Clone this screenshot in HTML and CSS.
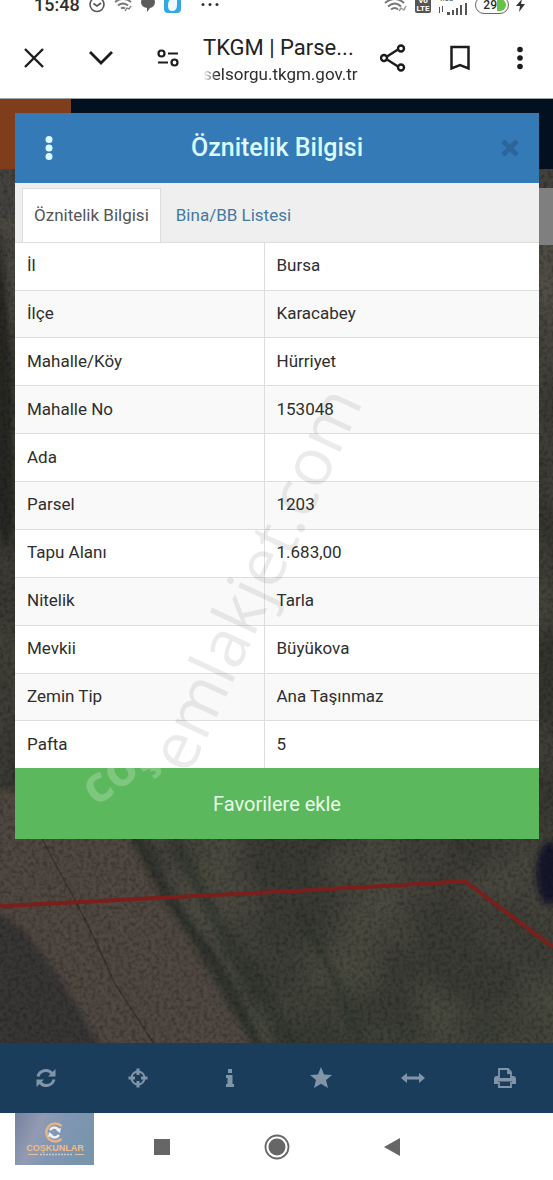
FILE: index.html
```html
<!DOCTYPE html>
<html lang="tr">
<head>
<meta charset="utf-8">
<meta name="viewport" content="width=device-width, initial-scale=1">
<title>TKGM | Parsel Sorgu</title>
<link rel="stylesheet" href="styles.css">
</head>
<body>
<div class="phone">
  <div class="status">
    <div class="status-group">
      <span class="clock">15:48</span>
      <svg width="18" height="24" viewBox="0 0 18 24" fill="none" stroke="#555" stroke-width="1.6"><circle cx="9" cy="11.500" r="7"/><path d="M5.500 10.500 9 13l4-3"/></svg>
      <svg width="18" height="24" viewBox="0 0 18 24" fill="none" stroke="#777" stroke-width="1.800"><path d="M1 9q8-6 16 0M4 12.500q5-4 10 0M7 15.500q2-1.500 4 0"/><path d="m11 18 2-3 2 1 2-3" stroke-width="1.300"/></svg>
      <svg width="16" height="24" viewBox="0 0 16 24" fill="#5c5c5c"><path d="M1 9a7 6 0 1 1 9 6l-3 4v-4Q1 14 1 9z"/></svg>
      <svg width="18" height="24" viewBox="0 0 18 24"><rect width="17" height="20" rx="4" fill="#35a7e4"/><path d="M4 13c0-6 3-9 9-9v8q0 6-5 6-4 0-4-5z" fill="#eefaff"/></svg>
      <svg class="more-dots" width="20" height="24" viewBox="0 0 20 24" fill="#333"><circle cx="3" cy="11.500" r="1.500"/><circle cx="10" cy="11.500" r="1.500"/><circle cx="17" cy="11.500" r="1.500"/></svg>
    </div>
    <div class="status-group status-end">
      <svg width="24" height="24" viewBox="0 0 24 24" fill="none" stroke="#777" stroke-width="2"><path d="M1 10q10-8 19 0M4 13.500q7-6 13 0M7 16.500q4-3 7 0"/><path d="m15 18 2-3 3 2 2-4" stroke="#999" stroke-width="1.500"/></svg>
      <span class="volte">Vo<br>LTE</span>
      <span class="signal">
        <span>4.58</span>
        <svg width="30" height="12" viewBox="0 0 30 12" fill="#555"><path d="M1 4h1v6H1zM4 3h1v6H4zM9 9h3v3H9zM14 7h2v5h-2zM18 5h2v7h-2zM22 2h2v10h-2zM27 0h2v12h-2z"/></svg>
      </span>
      <span class="battery"><b>29</b><i></i></span>
      <svg width="9" height="24" viewBox="0 0 9 24" fill="#333"><path d="M6 6 0 13h4l-1 6 6-8H5z"/></svg>
    </div>
  </div>

  <header class="browser">
    <button class="bar-button" type="button" aria-label="Kapat"><svg width="20" height="20" viewBox="0 0 20 20" fill="none" stroke="#1c1c1c" stroke-width="2.400"><path d="m1 1 18 18M19 1 1 19"/></svg></button>
    <button class="bar-button" type="button" aria-label="Küçült"><svg width="26" height="16" viewBox="0 0 26 16" fill="none" stroke="#1c1c1c" stroke-width="2.800"><path d="m2 2 11 11L24 2"/></svg></button>
    <button class="bar-button" type="button" aria-label="Site bilgileri"><svg width="22" height="18" viewBox="0 0 22 18" fill="none" stroke="#1c1c1c" stroke-width="2.200"><circle cx="4.500" cy="4.500" r="3"/><path d="M11 4.500h10M1 13.500h10"/><circle cx="17.500" cy="13.500" r="3"/></svg></button>
    <div class="page-id">
      <span class="page-title">TKGM | Parse...</span>
      <span class="page-url">selsorgu.tkgm.gov.tr</span>
    </div>
    <button class="bar-button" type="button" aria-label="Paylaş"><svg width="26" height="28" viewBox="0 0 26 28" fill="none" stroke="#1c1c1c" stroke-width="2.400"><path d="M7 12.500 18 5.500M7 15.500l11 7"/><circle cx="4" cy="14" r="3"/><circle cx="21" cy="4.500" r="3"/><circle cx="21" cy="23.500" r="3"/></svg></button>
    <button class="bar-button" type="button" aria-label="Yer işareti"><svg width="20" height="26" viewBox="0 0 20 26" fill="none" stroke="#1c1c1c" stroke-width="2.500"><path d="M1.500 2h17v21.500L10 20l-8.500 3.500z"/></svg></button>
    <button class="bar-button bar-menu" type="button" aria-label="Menü"><svg width="6" height="24" viewBox="0 0 6 24" fill="#1c1c1c"><circle cx="3" cy="3.500" r="2.800"/><circle cx="3" cy="12" r="2.800"/><circle cx="3" cy="20.500" r="2.800"/></svg></button>
  </header>

  <main class="stage">
    <svg class="map" viewBox="0 0 553 1015" preserveAspectRatio="none" aria-hidden="true">
      <defs>
        <filter id="grain" x="0" y="0" width="100%" height="100%">
          <feTurbulence type="fractalNoise" baseFrequency=".25" numOctaves="2" seed="4"/>
          <feColorMatrix values="0 0 0 0 0  0 0 0 0 0  0 0 0 0 0  1.2 0 0 0 -.5"/>
        </filter>
        <filter id="patches" x="0" y="0" width="100%" height="100%">
          <feTurbulence type="fractalNoise" baseFrequency=".012" numOctaves="2" seed="9"/>
          <feColorMatrix values="0 0 0 0 .3  0 0 0 0 .28  0 0 0 0 .18  1.2 0 0 0 -.45"/>
        </filter>
        <filter id="soft"><feGaussianBlur stdDeviation="3"/></filter>
        <linearGradient id="field" x2="0" y2="1"><stop stop-color="#45433e"/><stop offset=".5" stop-color="#33332d"/><stop offset=".8" stop-color="#3b3b35"/><stop offset="1" stop-color="#373b32"/></linearGradient>
      </defs>
      <rect width="553" height="1015" fill="url(#field)"/>
      <rect width="553" height="1015" filter="url(#patches)" opacity=".4"/>
      <path d="M0 70h15v50H0z" fill="#45433f"/>
      <g transform="translate(0 70)">
        <g filter="url(#soft)">
          <path d="M-5 620 110 640 162 730 205 800 250 878 260 950H100L40 820-5 760z" fill="#504740"/>
          <path d="M-5 742 25 762 62 812 102 880V950H-5z" fill="#393436"/>
          <path d="M133 660 165 725 215 795 265 890" stroke="#2d332c" stroke-width="9" fill="none"/>
          <path d="M150 660 190 735 235 810 270 880" stroke="#4b4b43" stroke-width="3" fill="none"/>
          <path d="M175 670 215 750 265 830 300 890" stroke="#2d332c" stroke-width="12" fill="none" opacity=".6"/>
          <path d="M300 740 330 800 360 870" stroke="#2d332c" stroke-width="8" fill="none" opacity=".5"/>
          <ellipse cx="550" cy="705" rx="14" ry="32" fill="#15182a"/>
          <path d="M-5 60q20 70 18 300Q0 420-5 300z" fill="#252622"/>
        </g>
        <path d="M42 670q15 30 32 60 22 42 40 84 22 34 44 68" stroke="#3b332c" stroke-width="1.500" fill="none"/>
        <path d="M68 680 140 790 195 880M98 700l75 110 45 70M15 690l100 150 20 40" stroke="#62564f" fill="none" opacity=".5"/>
      </g>
      <rect width="553" height="1015" filter="url(#grain)" opacity=".5"/>
      <path d="M0 808 170 799 290 793 465 783 553 849" fill="none" stroke="#7a1f1c" stroke-width="4"/>
    </svg>
    <div class="site-head" aria-hidden="true"><span></span></div>
    <div class="map-control" aria-hidden="true"></div>

    <section class="dialog" role="dialog" aria-labelledby="dialog-title">
      <div class="dialog-head">
        <button class="dialog-button" type="button" aria-label="Seçenekler"><svg width="8" height="24" viewBox="0 0 8 24" fill="#dcfbff"><circle cx="4" cy="3.500" r="3.500"/><circle cx="4" cy="12" r="3.500"/><circle cx="4" cy="20.500" r="3.500"/></svg></button>
        <h1 id="dialog-title">Öznitelik Bilgisi</h1>
        <button class="dialog-button dialog-close" type="button" aria-label="Kapat"><svg width="18" height="18" viewBox="0 0 18 18" stroke="#2c659a" stroke-width="5"><path d="m2 2 14 14M16 2 2 16"/></svg></button>
      </div>
      <div class="tabs" role="tablist">
        <button class="tab tab-active" type="button" role="tab" aria-selected="true">Öznitelik Bilgisi</button>
        <button class="tab" type="button" role="tab" aria-selected="false">Bina/BB Listesi</button>
      </div>
      <table class="facts">
        <tbody>
          <tr><th scope="row">İl</th><td>Bursa</td></tr>
          <tr><th scope="row">İlçe</th><td>Karacabey</td></tr>
          <tr><th scope="row">Mahalle/Köy</th><td>Hürriyet</td></tr>
          <tr><th scope="row">Mahalle No</th><td>153048</td></tr>
          <tr><th scope="row">Ada</th><td></td></tr>
          <tr><th scope="row">Parsel</th><td>1203</td></tr>
          <tr><th scope="row">Tapu Alanı</th><td>1.683,00</td></tr>
          <tr><th scope="row">Nitelik</th><td>Tarla</td></tr>
          <tr><th scope="row">Mevkii</th><td>Büyükova</td></tr>
          <tr><th scope="row">Zemin Tip</th><td>Ana Taşınmaz</td></tr>
          <tr><th scope="row">Pafta</th><td>5</td></tr>
        </tbody>
      </table>
      <button class="favorite" type="button">Favorilere ekle</button>
      <svg class="watermark" viewBox="0 0 524 726" aria-hidden="true">
        <text class="mark-main" transform="translate(174 663) rotate(-65)">emlakjet.com</text>
        <text class="mark-side" transform="translate(81 694) rotate(-36)">coş</text>
      </svg>
    </section>

    <nav class="tools" aria-label="Harita araçları">
      <button type="button" aria-label="Yenile"><svg width="20" height="20" viewBox="0 0 20 20"><path d="M2 8.500a8 8 0 0 1 14-3M18 11.500a8 8 0 0 1-14 3" fill="none" stroke="currentColor" stroke-width="3"/><path d="M19.500 1v7.500H12zM.5 19v-7.500H8z" fill="currentColor"/></svg></button>
      <button type="button" aria-label="Konum"><svg width="20" height="20" viewBox="0 0 20 20" fill="none" stroke="currentColor"><circle cx="10" cy="10" r="6.500" stroke-width="2"/><path d="M10 .5v6.500M10 13v6.500M.5 10H7M13 10h6.500" stroke-width="3"/></svg></button>
      <button type="button" aria-label="Bilgi"><svg width="10" height="20" viewBox="0 0 10 20" fill="currentColor"><path d="M3 1h4v4H3zM1 7h6.500v9H9v3H1v-3h1.500v-6H1z"/></svg></button>
      <button type="button" aria-label="Favoriler"><svg width="22" height="22" viewBox="0 0 22 22" fill="currentColor"><path d="m11 0 3 7.500 8 .6-6 5 2 8-7-4.400-7 4.400 2-8-6-5 8-.6z"/></svg></button>
      <button type="button" aria-label="Ölç"><svg width="24" height="12" viewBox="0 0 24 12" fill="currentColor"><path d="M0 6 6 1v3.500h12V1l6 5-6 5V7.500H6V11z"/></svg></button>
      <button type="button" aria-label="Yazdır"><svg width="22" height="20" viewBox="0 0 22 20"><path d="M5 10V1h9l3 3v6M14 1v4h3M5 14v5h12v-5" fill="none" stroke="currentColor" stroke-width="1.800"/><path d="M3 8h1.500v2h13V8H19q3 0 3 3v5h-4v-2.500H4V16H0v-5q0-3 3-3z" fill="currentColor"/></svg></button>
    </nav>
  </main>

  <footer class="system">
    <svg class="agency" width="79" height="52" viewBox="0 0 79 52" role="img" aria-label="Coşkunlar">
      <defs><linearGradient id="sky" x2="1" y2=".3"><stop stop-color="#77819f"/><stop offset=".35" stop-color="#929bb2"/><stop offset=".6" stop-color="#8296b3"/><stop offset="1" stop-color="#7895ac"/></linearGradient></defs>
      <rect width="79" height="52" fill="url(#sky)"/>
      <path d="M46.500 13a9 9 0 1 0 0 13" fill="none" stroke="#e3b584" stroke-width="2.600"/>
      <path d="M35 17q4-5 9 0M44 22q-4 5-9 0" fill="none" stroke="#eef1f5" stroke-width="2.600"/>
      <path d="m46 15-1 5-4-3zM33 24l1-5 4 3z" fill="#eef1f5"/>
      <text class="agency-name" x="40" y="38" text-anchor="middle">COŞKUNLAR</text>
      <path d="M13 41.500h10M60 41.500h9" stroke="#dfc3a4"/>
      <path d="M25 41.500h33" stroke="#c9cbd3" stroke-width="1.500" stroke-dasharray="2 1"/>
    </svg>
    <button type="button" aria-label="Son uygulamalar"><svg width="16" height="16" viewBox="0 0 16 16"><path d="M0 0h16v16H0z" fill="#666"/></svg></button>
    <button type="button" aria-label="Ana ekran"><svg width="26" height="26" viewBox="0 0 26 26"><circle cx="13" cy="13" r="11.500" fill="none" stroke="#666" stroke-width="1.800"/><circle cx="13" cy="13" r="8.500" fill="#666"/></svg></button>
    <button type="button" aria-label="Geri"><svg width="16" height="20" viewBox="0 0 16 20"><path d="M16 1v18L0 10z" fill="#666"/></svg></button>
  </footer>
</div>
</body>
</html>
```
FILE: styles.css
```css
* { box-sizing: border-box; }

body {
  margin: 0;
  background: #fff;
  color: #2e2e2e;
  font: 17px/24px Roboto, "Noto Sans", sans-serif;
}

button {
  margin: 0;
  padding: 0;
  border: 0;
  background: none;
  color: inherit;
  font: inherit;
}

svg { display: block; }

.phone {
  display: flex;
  flex-direction: column;
  min-height: 100vh;
}

/* Status bar, scrolled half out of view */
.status {
  display: flex;
  align-items: flex-end;
  justify-content: space-between;
  height: 17px;
  padding: 0 28px 0 34px;
  overflow: hidden;
}

.status-group {
  display: flex;
  align-items: center;
  gap: 8px;
}

.status-end { gap: 7px; }

.clock {
  font-size: 18px;
  font-weight: 500;
}

.more-dots { margin-left: 10px; }

.volte {
  width: 16px;
  border-radius: 2px;
  background: #555;
  color: #fff;
  font-size: 8px;
  font-weight: 700;
  line-height: 8px;
  text-align: center;
}

.signal {
  font-size: 8px;
  line-height: 8px;
}

.battery {
  display: flex;
  align-items: center;
  justify-content: flex-end;
  width: 34px;
  height: 18px;
  padding-right: 2px;
  border: 1px solid #666;
  border-radius: 9px;
  font-size: 12px;
}

.battery b { font-weight: 500; }

.battery i {
  width: 9px;
  height: 12px;
  border-radius: 0 6px 6px 0;
  background: #68c244;
}

/* Browser bar */
.browser {
  display: flex;
  align-items: center;
  height: 82px;
  border-bottom: 1px solid #9aa3a5;
}

.bar-button {
  display: flex;
  flex: none;
  align-items: center;
  justify-content: center;
  width: 67px;
  height: 56px;
}

.bar-menu {
  width: 60px;
  padding-right: 6px;
}

.page-id {
  display: flex;
  flex: 1;
  flex-direction: column;
  min-width: 0;
  padding: 5px 0 0 2px;
  white-space: nowrap;
}

.page-title {
  color: #222;
  font-size: 22px;
  line-height: 28px;
}

.page-url {
  overflow: hidden;
  font-size: 17px;
  -webkit-mask-image: linear-gradient(90deg, transparent, #000 14px);
  mask-image: linear-gradient(90deg, transparent, #000 14px);
}

/* Map with the dialog over it */
.stage {
  position: relative;
  display: flex;
  flex: 1;
  flex-direction: column;
  background: #33342f;
}

.map {
  position: absolute;
  inset: 0;
  width: 100%;
  height: 100%;
}

.site-head {
  position: absolute;
  inset: 0 0 auto;
  height: 70px;
  background: #02101f;
}

.site-head span {
  display: block;
  width: 71px;
  height: 100%;
  background: #7f3d1b;
}

.map-control {
  position: absolute;
  top: 89px;
  right: 0;
  width: 40px;
  height: 57px;
  background: #7f7f7f;
}

.dialog {
  position: relative;
  margin: 14px 14px 204px 15px;
  background: #fff;
}

.dialog-head {
  display: flex;
  align-items: center;
  height: 70px;
  background: #337ab7;
}

.dialog-head h1 {
  flex: 1;
  margin: 0;
  color: #dcfbff;
  font-size: 25px;
  font-weight: 500;
  line-height: 32px;
  text-align: center;
}

.dialog-button {
  display: flex;
  align-items: center;
  justify-content: center;
  width: 68px;
  height: 68px;
}

.dialog-close {
  padding-left: 10px;
}

.tabs {
  display: flex;
  height: 60px;
  padding: 5px 7px 0;
  border-bottom: 1px solid #ddd;
  background: #efefef;
}

.tab {
  height: 54px;
  padding: 0 11px 2px;
  border: 1px solid transparent;
  border-bottom: 0;
  color: #44799f;
}

.tab + .tab { margin-left: 3px; }

.tab-active {
  border-color: #ddd;
  background: #fff;
  color: #555;
}

.facts {
  width: 100%;
  height: 525px;
  border-collapse: collapse;
  table-layout: fixed;
}

.facts th,
.facts td {
  padding: 0 12px 2px;
  border-bottom: 1px solid #ddd;
  font-weight: 400;
  text-align: left;
}

.facts th {
  width: 249px;
  border-right: 1px solid #ddd;
}

.facts tr:nth-child(even) { background: #f9f9f9; }

.facts tr:last-child > * { border-bottom: 0; }

.favorite {
  display: block;
  width: 100%;
  height: 71px;
  background: #5cb85c;
  color: #e8fbe8;
  font-size: 20px;
}

.watermark {
  position: absolute;
  inset: 0;
  width: 100%;
  height: 100%;
  pointer-events: none;
}

.mark-main {
  fill: #000;
  fill-opacity: .08;
  font: 66px "Open Sans", sans-serif;
}

.mark-side {
  fill: #fff;
  fill-opacity: .22;
  font: 700 50px "Open Sans", sans-serif;
}

/* Map tools */
.tools {
  position: relative;
  display: flex;
  height: 70px;
  margin-top: auto;
  padding-right: 2px;
  background: #1a3d5c;
  color: #8295a8;
}

.tools button {
  display: flex;
  flex: 1;
  align-items: center;
  justify-content: center;
}

/* Android navigation */
.system {
  display: flex;
  height: 67px;
  padding-left: 15px;
}

.agency { margin-right: 10px; }

.agency-name {
  fill: #f0bd84;
  font: 700 9px "Liberation Sans", sans-serif;
}

.system button {
  display: flex;
  align-items: center;
  justify-content: center;
  width: 115px;
  height: 67px;
}
```
